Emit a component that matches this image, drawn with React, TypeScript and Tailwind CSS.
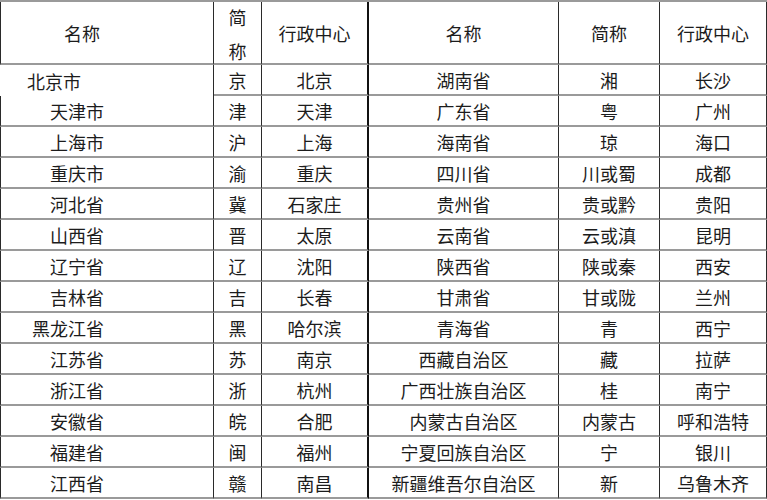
const left: [string, string, string][] = [
  ["北京市", "京", "北京"],
  ["天津市", "津", "天津"],
  ["上海市", "沪", "上海"],
  ["重庆市", "渝", "重庆"],
  ["河北省", "冀", "石家庄"],
  ["山西省", "晋", "太原"],
  ["辽宁省", "辽", "沈阳"],
  ["吉林省", "吉", "长春"],
  ["黑龙江省", "黑", "哈尔滨"],
  ["江苏省", "苏", "南京"],
  ["浙江省", "浙", "杭州"],
  ["安徽省", "皖", "合肥"],
  ["福建省", "闽", "福州"],
  ["江西省", "赣", "南昌"],
];

const right: [string, string, string][] = [
  ["湖南省", "湘", "长沙"],
  ["广东省", "粤", "广州"],
  ["海南省", "琼", "海口"],
  ["四川省", "川或蜀", "成都"],
  ["贵州省", "贵或黔", "贵阳"],
  ["云南省", "云或滇", "昆明"],
  ["陕西省", "陕或秦", "西安"],
  ["甘肃省", "甘或陇", "兰州"],
  ["青海省", "青", "西宁"],
  ["西藏自治区", "藏", "拉萨"],
  ["广西壮族自治区", "桂", "南宁"],
  ["内蒙古自治区", "内蒙古", "呼和浩特"],
  ["宁夏回族自治区", "宁", "银川"],
  ["新疆维吾尔自治区", "新", "乌鲁木齐"],
];

const cell = "flex items-center justify-center border-r border-b-2 border-r-[#2a2a2a] border-b-[#9a9a9a] whitespace-nowrap";
const mid = "flex items-center justify-center border-r-2 border-b-2 border-r-[#111] border-b-[#9a9a9a] whitespace-nowrap";

export default function App() {
  return (
    <div
      className="w-[767px] h-[500px] bg-white text-[#1c1c1c] text-[18px] leading-none"
      style={{ fontFamily: '"Noto Sans CJK SC", sans-serif' }}
    >
      <div className="grid grid-cols-[214px_48px_107px_190px_101px_107px] grid-rows-[63px_repeat(14,31px)] border-t-2 border-t-[#9a9a9a]">
        {/* header */}
        <div className={cell + " border-l border-l-[#2a2a2a] pr-[50px]"}>名称</div>
        <div className={cell + " flex-col !justify-start pt-[6px] gap-[16px]"}>
          <span>简</span>
          <span>称</span>
        </div>
        <div className={mid}>行政中心</div>
        <div className={cell}>名称</div>
        <div className={cell}>简称</div>
        <div className={cell}>行政中心</div>

        {left.map((l, i) => {
          const r = right[i];
          const first = i === 0;
          return [
            <div
              key={"a" + i}
              className={
                first
                  ? "flex items-center justify-start pl-[27px] border-r border-r-[#2a2a2a] whitespace-nowrap"
                  : cell + " border-l border-l-[#2a2a2a] !justify-end pr-[109px]"
              }
            >
              {l[0]}
            </div>,
            <div key={"b" + i} className={cell}>{l[1]}</div>,
            <div key={"c" + i} className={mid}>{l[2]}</div>,
            <div key={"d" + i} className={cell}>{r[0]}</div>,
            <div key={"e" + i} className={cell}>{r[1]}</div>,
            <div key={"f" + i} className={cell}>{r[2]}</div>,
          ];
        })}
      </div>
    </div>
  );
}
